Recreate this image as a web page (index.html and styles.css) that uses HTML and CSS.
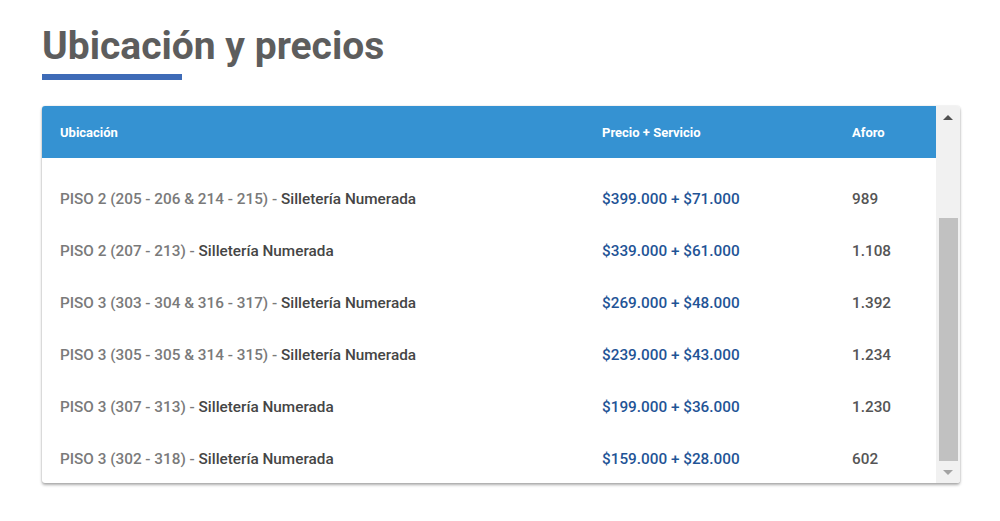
FILE: index.html
```html
<!DOCTYPE html>
<html lang="es">
<head>
<meta charset="utf-8">
<title>Ubicación y precios</title>
<link rel="stylesheet" href="styles.css">
</head>
<body>
<section class="section">
  <h2 class="title">Ubicación y precios</h2>
  <div class="title-bar"></div>
  <div class="card">
    <div class="table">
      <div class="thead">
        <div class="th">Ubicación</div>
        <div class="th">Precio + Servicio</div>
        <div class="th">Aforo</div>
      </div>
      <div class="tbody">
        <div class="tr"><div class="td loc">PISO 2 (205 - 206 &amp; 214 - 215) - <b>Silletería Numerada</b></div><div class="td price">$399.000 + $71.000</div><div class="td cap">989</div></div>
        <div class="tr"><div class="td loc">PISO 2 (207 - 213) - <b>Silletería Numerada</b></div><div class="td price">$339.000 + $61.000</div><div class="td cap">1.108</div></div>
        <div class="tr"><div class="td loc">PISO 3 (303 - 304 &amp; 316 - 317) - <b>Silletería Numerada</b></div><div class="td price">$269.000 + $48.000</div><div class="td cap">1.392</div></div>
        <div class="tr"><div class="td loc">PISO 3 (305 - 305 &amp; 314 - 315) - <b>Silletería Numerada</b></div><div class="td price">$239.000 + $43.000</div><div class="td cap">1.234</div></div>
        <div class="tr"><div class="td loc">PISO 3 (307 - 313) - <b>Silletería Numerada</b></div><div class="td price">$199.000 + $36.000</div><div class="td cap">1.230</div></div>
        <div class="tr"><div class="td loc">PISO 3 (302 - 318) - <b>Silletería Numerada</b></div><div class="td price">$159.000 + $28.000</div><div class="td cap">602</div></div>
      </div>
    </div>
    <div class="scrollbar">
      <div class="sb-btn up"><span class="tri tri-up"></span></div>
      <div class="sb-space"></div>
      <div class="sb-thumb"></div>
      <div class="sb-btn down"><span class="tri tri-down"></span></div>
    </div>
  </div>
</section>
</body>
</html>
```

FILE: styles.css
```css
* { box-sizing: border-box; }
html, body { margin: 0; padding: 0; background: #fff; }
body { font-family: Roboto, "Liberation Sans", Arial, sans-serif; min-height: 521px; }

.section {
  padding: 22px 40px 0 42px;
}

.title {
  margin: 0;
  font-size: 39px;
  font-weight: 700;
  line-height: 48px;
  color: #5d5d5d;
}

.title-bar {
  width: 140px;
  height: 6px;
  background: #3e6bb7;
  margin-top: 4px;
}

.card {
  margin-top: 26px;
  width: 918px;
  height: 377px;
  display: flex;
  background: #fff;
  box-shadow: 0 2px 3px rgba(0,0,0,0.32), 0 0 2px rgba(0,0,0,0.14);
  border-radius: 3px;
  overflow: hidden;
}

.table {
  flex: 1;
  display: flex;
  flex-direction: column;
  overflow: hidden;
}

.thead {
  height: 52px;
  flex: none;
  background: #3592d2;
  display: grid;
  grid-template-columns: 542px 250px 1fr;
  align-items: center;
  padding-left: 18px;
}

.th {
  color: #fff;
  font-size: 13px;
  font-weight: 700;
}

.tbody { padding-top: 15px; }

.tr {
  height: 52px;
  display: grid;
  grid-template-columns: 542px 250px 1fr;
  align-items: center;
  padding-left: 18px;
}

.td { font-size: 15.3px; font-weight: 500; }
.loc { color: #7a7a7a; }
.loc b { color: #454545; font-weight: 500; }
.price { color: #1f5496; }
.cap { color: #555; }

.scrollbar {
  width: 24px;
  flex: none;
  background: #f1f1f1;
  display: flex;
  flex-direction: column;
  align-items: center;
}

.sb-btn {
  height: 22px;
  width: 100%;
  display: flex;
  align-items: center;
  justify-content: center;
  flex: none;
}
.sb-space { height: 90px; flex: none; }
.sb-thumb {
  flex: 1;
  width: 19px;
  background: #c1c1c1;
}

.tri { width: 0; height: 0; display: block; }
.tri-up {
  border-left: 5px solid transparent;
  border-right: 5px solid transparent;
  border-bottom: 5px solid #505050;
}
.tri-down {
  border-left: 5px solid transparent;
  border-right: 5px solid transparent;
  border-top: 5px solid #a3a3a3;
}
```
